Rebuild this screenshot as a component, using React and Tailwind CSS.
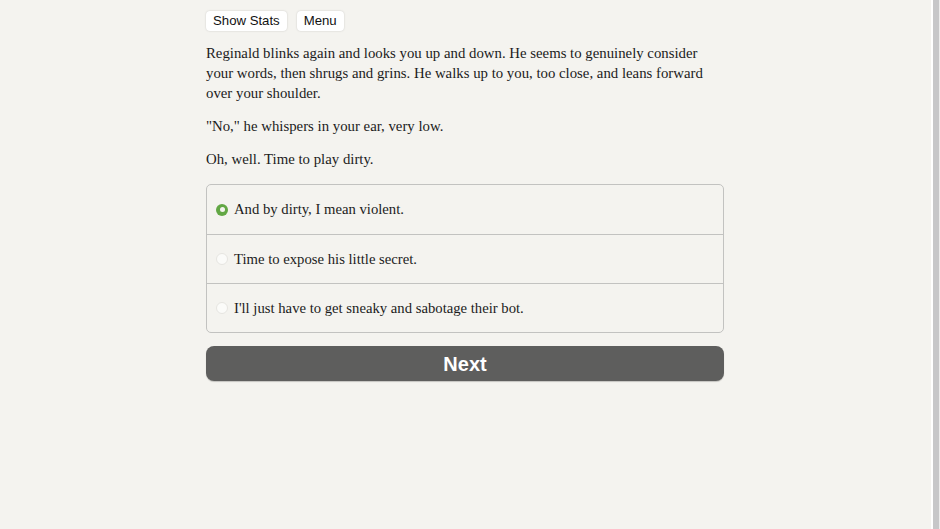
import React, { useState } from 'react';

const CHOICES = [
  'And by dirty, I mean violent.',
  'Time to expose his little secret.',
  "I'll just have to get sneaky and sabotage their bot.",
];

export default function App() {
  const [picked, setPicked] = useState(0);

  return (
    <div className="h-[529px] w-[940px] flex bg-[#f4f3ef] overflow-hidden">
      {/* Page column */}
      <div className="flex-1 flex justify-center">
        <div className="w-[518px] mr-[1px] pt-[11px]">
          {/* Top buttons */}
          <div className="flex gap-[10px] font-['Liberation_Sans',Arial,sans-serif]">
            <button className="h-[20px] px-[7px] rounded-[4px] bg-white text-[13.2px] text-[#111] shadow-[0_0_2px_rgba(0,0,0,0.18)] leading-none">
              Show Stats
            </button>
            <button className="h-[20px] px-[7px] rounded-[4px] bg-white text-[13.2px] text-[#111] shadow-[0_0_2px_rgba(0,0,0,0.18)] leading-none">
              Menu
            </button>
          </div>

          {/* Story text */}
          <div className="mt-[12px] font-['Liberation_Serif','Times_New_Roman',serif] text-[14.8px] leading-[20px] text-[#1b1b1b] space-y-[13px]">
            <p>
              Reginald blinks again and looks you up and down. He seems to genuinely consider your words, then shrugs and grins. He walks up to you, too close, and leans forward over your shoulder.
            </p>
            <p>"No," he whispers in your ear, very low.</p>
            <p>Oh, well. Time to play dirty.</p>
          </div>

          {/* Choices */}
          <div className="mt-[15px] border border-[#c2c2c0] rounded-[5px] font-['Liberation_Serif','Times_New_Roman',serif] text-[14.7px] text-[#1b1b1b]">
            {CHOICES.map((c, i) => (
              <label
                key={i}
                onClick={() => setPicked(i)}
                className={`h-[49px] flex items-center pl-[9px] gap-[6px] cursor-pointer ${i > 0 ? 'border-t border-[#c2c2c0]' : ''}`}
              >
                {picked === i ? (
                  <span className="w-[12px] h-[12px] rounded-full bg-[#62a744] flex items-center justify-center">
                    <span className="w-[5px] h-[5px] rounded-full bg-[#f4f3ef]" />
                  </span>
                ) : (
                  <span className="w-[12px] h-[12px] rounded-full bg-[#fbfbf9] border border-[#e6e5e1]" />
                )}
                <span>{c}</span>
              </label>
            ))}
          </div>

          {/* Next */}
          <button className="mt-[13px] w-full h-[35px] rounded-[8px] bg-[#5e5e5d] text-white font-bold text-[20px] font-['Liberation_Sans',Arial,sans-serif] shadow-[0_1px_1px_rgba(0,0,0,0.2)]">
            Next
          </button>
        </div>
      </div>

      {/* Scrollbar */}
      <div className="w-[9px] flex">
        <div className="w-[2px] bg-[#ffffff]" />
        <div className="w-[6px] bg-[#c7c7c9]" />
        <div className="w-[1px] bg-[#ececec]" />
      </div>
    </div>
  );
}
